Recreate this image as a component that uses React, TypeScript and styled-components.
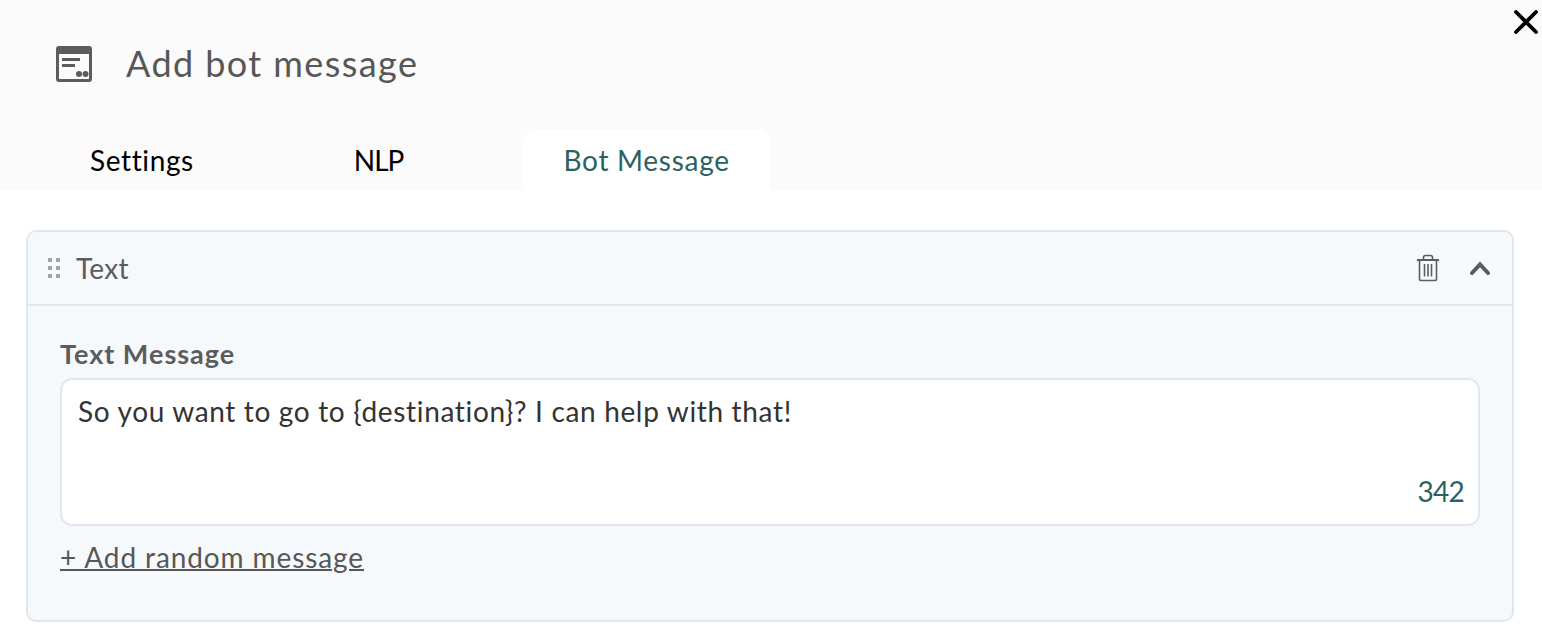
import styled, { createGlobalStyle } from "styled-components";

const GlobalStyle = createGlobalStyle`
  html, body {
    margin: 0;
    background: #fff;
    font-family: "Lato", "Liberation Sans", sans-serif;
  }
`;

function App() {
  return (
    <>
      <GlobalStyle />
      <Page>
        <CloseButton aria-label="close">
          <svg width="24" height="24" viewBox="0 0 24 24">
            <path d="M2 2 L22 22 M22 2 L2 22" stroke="#000" strokeWidth="3.8" strokeLinecap="round" fill="none" />
          </svg>
        </CloseButton>
        <Header>
          <TitleRow>
            <svg width="36" height="36" viewBox="0 0 36 36">
              <path
                fill="#5c5c5c"
                fillRule="evenodd"
                d="M3 0h30a3 3 0 0 1 3 3v30a3 3 0 0 1-3 3H3a3 3 0 0 1-3-3V3a3 3 0 0 1 3-3zM3 8v24.5a.5.5 0 0 0 .5.5h29a.5.5 0 0 0 .5-.5V8z"
              />
              <rect x="6" y="12" width="18" height="3" fill="#5c5c5c" />
              <rect x="6" y="18" width="13" height="3" fill="#5c5c5c" />
              <circle cx="23" cy="28" r="3" fill="#5c5c5c" />
              <circle cx="29.5" cy="28" r="3" fill="#5c5c5c" />
            </svg>
            <Title>Add bot message</Title>
          </TitleRow>
          <Tabs>
            <Tab $spacing={0.62}>Settings</Tab>
            <Tab $spacing={-1}>NLP</Tab>
            <Tab $active $spacing={0.72}>Bot Message</Tab>
          </Tabs>
        </Header>
        <Body>
          <Card>
            <CardHeader>
              <HeaderLeft>
                <svg width="14" height="20" viewBox="0 0 14 20">
                  {[0, 8, 16].map((y) =>
                    [1, 9].map((x) => <rect key={`${x}-${y}`} x={x} y={y} width="4" height="4" fill="#a3a3a3" />)
                  )}
                </svg>
                <CardTitle>Text</CardTitle>
              </HeaderLeft>
              <HeaderIcons>
                <svg width="24" height="28" viewBox="0 0 24 28" fill="none" stroke="#5c5c5c" strokeWidth="1.6">
                  <path d="M1 6h22" strokeWidth="2" />
                  <path d="M7.5 5.5V3.5a2 2 0 0 1 2-2h5a2 2 0 0 1 2 2v2" />
                  <path d="M3.5 6v19a1.5 1.5 0 0 0 1.5 1.5h14a1.5 1.5 0 0 0 1.5-1.5V6" />
                  <path d="M8.5 10v12.5M12 10v12.5M15.5 10v12.5" />
                </svg>
                <svg width="20" height="14" viewBox="0 0 20 14" fill="none">
                  <path d="M2 12 L10 3.5 L18 12" stroke="#5c5c5c" strokeWidth="4" strokeLinecap="round" strokeLinejoin="miter" />
                </svg>
              </HeaderIcons>
            </CardHeader>
            <CardBody>
              <FieldLabel>Text Message</FieldLabel>
              <MessageBox>
                <MessageText>So you want to go to {"{destination}"}? I can help with that!</MessageText>
                <Counter>342</Counter>
              </MessageBox>
              <AddLink>+ Add random message</AddLink>
            </CardBody>
          </Card>
        </Body>
      </Page>
    </>
  );
}

export default App;

const Page = styled.div`
  position: relative;
  width: 1542px;
  height: 640px;
  overflow: hidden;
`;

const CloseButton = styled.div`
  position: absolute;
  top: 10px;
  right: 4px;
  width: 24px;
  height: 24px;
`;

const Header = styled.header`
  height: 190px;
  background: #fbfbfb;
  display: flex;
  flex-direction: column;
  justify-content: space-between;
`;

const TitleRow = styled.div`
  display: flex;
  align-items: center;
  gap: 34px;
  padding: 46px 0 0 56px;
`;

const Title = styled.h1`
  margin: -2px 0 0;
  font-size: 36px;
  line-height: 36px;
  font-weight: 400;
  letter-spacing: 1.42px;
  color: #575757;
`;

const Tabs = styled.div`
  display: flex;
  gap: 80px;
  padding-left: 50px;
`;

const Tab = styled.div<{ $active?: boolean; $spacing: number }>`
  height: 60px;
  padding: 0 40px;
  display: flex;
  align-items: center;
  font-size: 28px;
  letter-spacing: ${(p) => p.$spacing}px;
  color: ${(p) => (p.$active ? "#2b6161" : "#000")};
  background: ${(p) => (p.$active ? "#fff" : "transparent")};
  border-radius: 12px 12px 0 0;
`;

const Body = styled.main`
  padding: 40px 28px 0 26px;
`;

const Card = styled.section`
  height: 392px;
  box-sizing: border-box;
  border: 2px solid #e1e7ee;
  border-radius: 10px;
  background: #f6f9fc;
`;

const CardHeader = styled.div`
  height: 74px;
  box-sizing: border-box;
  border-bottom: 2px solid #e1e7ee;
  display: flex;
  align-items: center;
  justify-content: space-between;
  padding: 0 22px 0 19px;
`;

const HeaderLeft = styled.div`
  display: flex;
  align-items: center;
  gap: 15px;
`;

const CardTitle = styled.span`
  font-size: 28px;
  letter-spacing: 0.25px;
  color: #5c5c5c;
`;

const HeaderIcons = styled.div`
  display: flex;
  align-items: center;
  gap: 30px;
`;

const CardBody = styled.div`
  padding: 31px 32px 0 32px;
`;

const FieldLabel = styled.div`
  font-size: 27px;
  line-height: 34px;
  font-weight: 700;
  letter-spacing: 1px;
  color: #5c5c5c;
`;

const MessageBox = styled.div`
  position: relative;
  margin-top: 7px;
  height: 148px;
  box-sizing: border-box;
  background: #fff;
  border: 2px solid #e1e7ee;
  border-radius: 12px;
  padding: 14px 16px;
`;

const MessageText = styled.div`
  font-size: 28px;
  line-height: 34px;
  letter-spacing: 0.66px;
  color: #333;
`;

const Counter = styled.span`
  position: absolute;
  right: 14px;
  bottom: 16px;
  font-size: 28px;
  line-height: 34px;
  letter-spacing: -0.7px;
  color: #2b6161;
`;

const AddLink = styled.a`
  display: inline-block;
  margin-top: 14px;
  font-size: 28px;
  line-height: 34px;
  letter-spacing: 0.9px;
  color: #575757;
  text-decoration: underline;
  text-decoration-thickness: 2px;
`;
